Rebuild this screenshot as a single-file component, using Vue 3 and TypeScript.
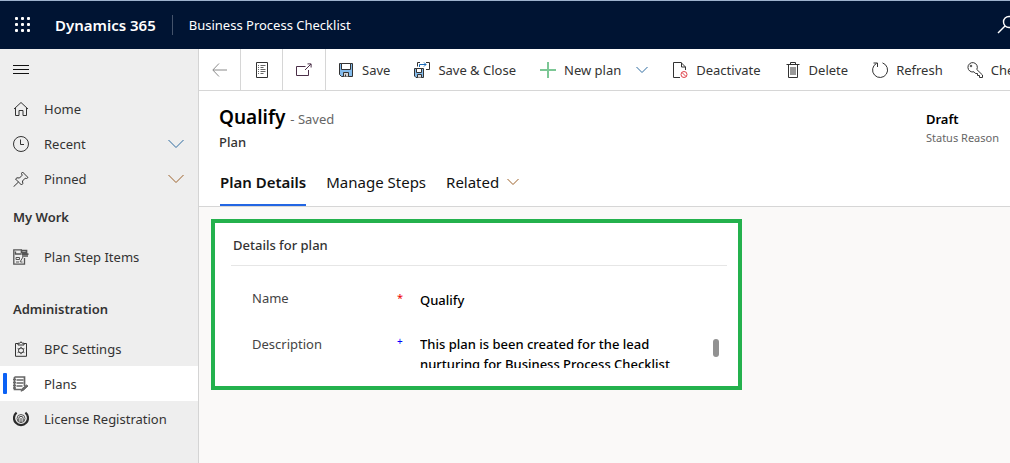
<script setup lang="ts">
import { ref } from 'vue'

interface NavItem { label: string; icon: string; expandable?: boolean }
interface NavGroup { title: string; items: NavItem[] }

const mainItems: NavItem[] = [
  { label: 'Home', icon: 'home' },
  { label: 'Recent', icon: 'clock', expandable: true },
  { label: 'Pinned', icon: 'pin', expandable: true },
]
const groups: NavGroup[] = [
  { title: 'My Work', items: [{ label: 'Plan Step Items', icon: 'steps' }] },
  {
    title: 'Administration',
    items: [
      { label: 'BPC Settings', icon: 'settings' },
      { label: 'Plans', icon: 'plans' },
      { label: 'License Registration', icon: 'license' },
    ],
  },
]
const current = ref('Plans')
const activeTab = ref('Plan Details')
const tabs = ['Plan Details', 'Manage Steps', 'Related']
const planName = ref('Qualify')
const description = ref('This plan is been created for the lead nurturing for Business Process Checklist')
</script>

<template>
  <div class="app">
    <header class="topbar">
      <button class="waffle" aria-label="App launcher">
        <svg width="16" height="16" viewBox="0 0 16 16" fill="#fff">
          <template v-for="r in 3" :key="r">
            <rect v-for="c in 3" :key="c" :x="(c - 1) * 6" :y="(r - 1) * 6" width="3" height="3" rx="1" />
          </template>
        </svg>
      </button>
      <span class="brand">Dynamics 365</span>
      <span class="app-name">Business Process Checklist</span>
      <button class="search" aria-label="Search">
        <svg width="20" height="20" viewBox="0 0 20 20" fill="none" stroke="#fff" stroke-width="1.4">
          <circle cx="12" cy="7" r="5.5" /><path d="M8 11 1 18" />
        </svg>
      </button>
    </header>

    <div class="body">
      <nav class="sidebar" aria-label="Site map">
        <button class="hamburger" aria-label="Collapse navigation">
          <svg width="16" height="10" viewBox="0 0 16 10" stroke="#111" fill="none"><path d="M0 .5h16M0 4.500h16M0 8.500h16" /></svg>
        </button>
        <ul>
          <li v-for="item in mainItems" :key="item.label">
            <component :is="item.expandable ? 'button' : 'a'" class="nav-item" :href="item.expandable ? undefined : '#'">
              <svg v-if="item.icon === 'home'" class="ico" viewBox="0 0 16 16"><path d="M1 8 8 1.500 15 8M2.500 7v7.500h3.500V9.500h4v5h3.500V7" /></svg>
              <svg v-else-if="item.icon === 'clock'" class="ico" viewBox="0 0 16 16"><circle cx="8" cy="8" r="7.500" /><path d="M7.500 3.500v5h3.500" /></svg>
              <svg v-else class="ico" viewBox="0 0 16 16"><path d="M9.500 1 15 6.500 13.500 7.500l-1.300-.3L9.500 10l.3 2.500L8.500 14 2.500 8l1.500-1.200 2.500.2L9.200 4.200 8.500 2.500zM5.500 11 .5 15.800" /></svg>
              <span>{{ item.label }}</span>
              <svg v-if="item.expandable" class="chev" width="16" height="10" viewBox="0 0 16 10" :class="item.icon"><path d="M.5 1 8 8.500 15.500 1" /></svg>
            </component>
          </li>
        </ul>
        <section v-for="group in groups" :key="group.title" class="group">
          <h2>{{ group.title }}</h2>
          <ul>
            <li v-for="item in group.items" :key="item.label">
              <a href="#" class="nav-item" :class="{ current: current === item.label }" @click.prevent="current = item.label">
                <svg v-if="item.icon === 'steps'" class="ico" viewBox="0 0 16 16">
                  <g stroke="#555"><path d="M9 .8H.8v14.400h10.700V9M2.500 2.500v2.500H8" stroke-width="1.300" /><path d="M3 8.500h3.500v2H3zM3 13h3M7 13l3-5M7.500 13h2" /><path d="M8.500 1.500h5v2h-5zM8.500 5.200h7M9 7h6" stroke-width="1.700" /></g>
                </svg>
                <svg v-else-if="item.icon === 'settings'" class="ico" viewBox="0 0 16 16">
                  <path d="M5 2.500H2.500v12.800h11V2.500H11M5 4V2.200h1.800L8 .7l1.200 1.500H11V4z" />
                  <circle cx="8" cy="9.500" r="2.500" /><path d="M8 5.800V7M8 12v1.200M4.700 7.500l1.200.7M10.100 10.800l1.200.7M11.300 7.500l-1.200.7M5.900 10.800l-1.200.7" />
                </svg>
                <svg v-else-if="item.icon === 'plans'" class="ico" viewBox="0 0 16 16">
                  <g stroke="#666"><path d="M1.500 1h10v9M1.500 1v12.500h7" stroke-width="1.700" /><path d="M0 3.500h3M0 6.500h3M0 9.500h3M0 12h3M3.500 4h7M3.500 7h7M3.500 10h6" stroke-width="1.600" /><path d="m15 10-4.500 4.200-2.500 1 1-2.500L13.500 9z" fill="#666" /></g>
                </svg>
                <svg v-else class="ico" viewBox="0 0 16 16">
                  <path d="M3.600 1.600A7 7 0 1 0 12.400 1.600" stroke="#2b2b2b" stroke-width="2.200" /><circle cx="8" cy="7.500" r="4" stroke="#555" /><path d="M5.800 10V7.500a2.200 2.200 0 0 1 4.400 0V10M8 7v5" stroke="#444" />
                </svg>
                <span>{{ item.label }}</span>
              </a>
            </li>
          </ul>
        </section>
      </nav>

      <main class="main">
        <div class="commands" role="toolbar" aria-label="Commands">
          <button class="sq" aria-label="Back"><svg width="16" height="14" viewBox="0 0 16 14" fill="none" stroke="#8a8a8a"><path d="M7 .5.8 7 7 13.500M1 7h14" /></svg></button>
          <button class="sq" aria-label="Form"><svg width="14" height="16" viewBox="0 0 14 16" fill="none" stroke="#333"><path d="M1.500.5h11v15h-11z" /><path d="M3 3.500h1M5.500 3.500h5M3 5.500h1M5.500 5.500h3M3 7.500h1M5.500 7.500h5M3 9.500h1M5.500 9.500h5M3 11.500h1M5.500 11.500h3" stroke="#666" /></svg></button>
          <button class="sq wide" aria-label="Open in new window"><svg width="16" height="14" viewBox="0 0 16 14" fill="none" stroke="#4b2f48"><path d="M9.500 3.500H.5v9h12V7M9 7l6-6M11.500.9h3.600v3.600" /></svg></button>
          <button class="cmd">
            <svg viewBox="0 0 16 16" fill="none" stroke="#333"><path d="M1.500 1.500h13v13h-11l-2-2z" fill="#83bbec" /><path d="M3.500 1.500h9v6h-9z" fill="#fff" /><path d="M5.500 14.500v-4h5v4" fill="#d5d5d5" /><path d="M7.500 12.500v2" /></svg>Save
          </button>
          <button class="cmd">
            <svg viewBox="0 0 16 16" fill="none" stroke="#333"><path d="M.5 6.500h9v9h-7.500L.5 14z" fill="#83bbec" /><path d="M2.500 6.500h5v4h-5z" fill="#fff" /><path d="M3.500 15.500v-3h4v3" fill="#ddd" /><path d="M3.500 4.500v-4H6M12 .5h3.500v7H12" /><path d="M5.500 5V2.500h6.500M10 .5l2 2-2 2" stroke="#1668b8" /></svg>Save &amp; Close
          </button>
          <button class="cmd">
            <svg viewBox="0 0 16 16" fill="none" stroke="#7cc795" stroke-width="2"><path d="M8 0v16M0 8h16" /></svg>New plan
            <svg class="small-chev" viewBox="0 0 12 8"><path d="M.5 1 6 6.500 11.500 1" /></svg>
          </button>
          <button class="cmd">
            <svg viewBox="0 0 16 16" fill="none" stroke="#333"><path d="M8 15.500H1.500V.5H9L13.500 5v3M9.500.5V5h4" /><circle cx="12" cy="12.500" r="3" stroke="#e0434b" /><path d="m10 10.500 4 4" stroke="#e0434b" /></svg>Deactivate
          </button>
          <button class="cmd">
            <svg viewBox="0 0 16 16" fill="none" stroke="#333"><path d="M1.500 2.500h13M5.500 2.500v-2h5v2M3.500 2.500v13h9v-13M6 5v8M8 5v8M10 5v8" /></svg>Delete
          </button>
          <button class="cmd">
            <svg viewBox="0 0 16 16" fill="none" stroke="#333"><path d="M10.500.9a7.500 7.500 0 1 1-6 .5M1.500 1h4v4" /></svg>Refresh
          </button>
          <button class="cmd">
            <svg viewBox="0 0 16 16" fill="none" stroke="#333"><path d="M9.800 7.500 15.500 13v2.500h-3v-2h-2v-2h-2L7 9.800A4.700 4.700 0 1 1 9.800 7.500z" /><circle cx="4" cy="4" r=".8" /></svg>Check
          </button>
        </div>

        <div class="record">
          <div class="record-head">
            <div>
              <h1>Qualify <small>- Saved</small></h1>
              <p class="entity">Plan</p>
            </div>
            <dl class="status"><dd>Draft</dd><dt>Status Reason</dt></dl>
          </div>
          <div class="tabs" role="tablist">
            <button v-for="tab in tabs" :key="tab" role="tab" :aria-selected="activeTab === tab" :class="{ active: activeTab === tab }" @click="activeTab = tab">
              {{ tab }}
              <svg v-if="tab === 'Related'" class="small-chev related" viewBox="0 0 12 8"><path d="M.5 1 6 6.500 11.500 1" /></svg>
            </button>
          </div>
        </div>

        <div class="canvas">
          <section class="card">
            <h3>Details for plan</h3>
            <div class="field">
              <label for="name">Name</label><span class="mark required">*</span>
              <input id="name" v-model="planName" type="text" />
            </div>
            <div class="field">
              <label for="description">Description</label><span class="mark recommended">+</span>
              <div class="scroll-area">
                <textarea id="description" v-model="description"></textarea>
                <span class="thumb"></span>
              </div>
            </div>
          </section>
        </div>
      </main>
    </div>
  </div>
</template>

<style>
html, body { margin: 0; overflow: hidden; }
</style>

<style scoped>
* { box-sizing: border-box; }
.app { min-height: 100vh; display: flex; flex-direction: column; font-family: "Segoe UI", "Noto Sans", "Open Sans", sans-serif; font-size: 13px; color: #333; }
button, input, textarea { font: inherit; color: inherit; background: none; border: 0; padding: 0; margin: 0; border-radius: 0; }
h1, h2, h3, p, ul, dl, dd { margin: 0; padding: 0; }
ul { list-style: none; }
a { color: inherit; text-decoration: none; }
svg { display: block; flex: none; }
.topbar { height: 49px; background: #001433; color: #fff; border-top: 1px solid #9db2cd; display: flex; align-items: center; padding-left: 15px; overflow: hidden; }
.waffle { margin-right: 24px; }
.brand { font-size: 15px; font-weight: 600; line-height: 20px; padding-right: 16px; }
.app-name { border-left: 1px solid #44536b; padding-left: 16px; line-height: 20px; white-space: nowrap; }
.search { margin-left: auto; margin-right: -7px; }
.body { flex: 1; display: flex; }
.sidebar { width: 199px; flex: none; background: #eee; border-right: 1px solid #d4d4d4; }
.hamburger { display: flex; align-items: center; height: 42px; padding-left: 13px; }
.nav-item { display: flex; align-items: center; width: 100%; height: 35px; padding: 0 14px 0 13px; position: relative; text-align: left; }
.nav-item span { margin-left: 15px; white-space: nowrap; }
.ico { width: 16px; height: 16px; fill: none; stroke: #333; }
.chev { fill: none; stroke: #2c6a9f; margin-left: auto; }
.chev.pin { stroke: #9c6128; }
.current { background: #fff; }
.current::before { content: ""; position: absolute; left: 3px; top: 7px; width: 4px; height: 21px; background: #0b61f5; border-radius: 1px; }
h2 { font-size: 13px; font-weight: 600; line-height: 43px; padding-left: 13px; }
.group + .group { padding-top: 14px; }
.main { flex: 1; min-width: 0; display: flex; flex-direction: column; background: #faf9f8; }
.commands { height: 42px; background: #fff; border-bottom: 1px solid #d6d6d6; display: flex; overflow: hidden; }
.sq { flex: none; width: 42px; border-right: 1px solid #d6d6d6; display: flex; align-items: center; justify-content: center; }
.sq.wide { width: 43px; }
.cmd { flex: none; display: flex; align-items: center; gap: 8px; padding: 0 12px; white-space: nowrap; }
.cmd svg { width: 16px; height: 16px; }
.small-chev, .cmd .small-chev { width: 12px; height: 8px; fill: none; stroke: #2c6a9f; }
.cmd .small-chev { margin-left: 7px; }
.record { background: #fff; border-bottom: 1px solid #d6d6d6; padding-left: 20px; }
.record-head { display: flex; justify-content: space-between; padding: 14px 11px 0 0; }
h1 { font-size: 19px; font-weight: 600; line-height: 25px; color: #000; }
small { font-size: 13px; font-weight: 400; color: #666; }
.entity { line-height: 20px; font-weight: 500; }
.status { display: flex; flex-direction: column; padding-top: 5px; }
.status dd { font-weight: 600; line-height: 18px; color: #000; }
.status dt { font-size: 11px; line-height: 20px; color: #666; }
.tabs { display: flex; gap: 20px; margin-top: 8px; padding-left: 1px; }
.tabs button { height: 46px; display: flex; align-items: center; gap: 8px; font-size: 15px; color: #111; border-bottom: 2px solid transparent; }
.tabs .active { font-weight: 600; border-color: #2266e3; }
.small-chev.related { stroke: #9c6128; }
.canvas { flex: 1; padding: 12px; }
.card { width: 100%; max-width: 531px; border: 4px solid #24b14d; background: #fff; padding: 0 11px 18px 16px; }
h3 { font-size: 13px; font-weight: 500; line-height: 44px; height: 43px; padding-left: 2px; border-bottom: 1px solid #e6e6e6; }
.field { display: grid; grid-template-columns: 145px 23px 1fr; padding-left: 21px; color: #444; }
.field label { line-height: 20px; }
.field + .field { padding-top: 22px; }
h3 + .field { padding-top: 22px; }
.mark { line-height: 20px; font-size: 11px; }
.required { color: #e00; }
.recommended { color: #00f; font-size: 10px; line-height: 14px; }
input { width: 100%; height: 24px; font-weight: 500; color: #000; }
.scroll-area { display: flex; justify-content: space-between; }
textarea { width: 270px; height: 34px; line-height: 20px; resize: none; overflow: hidden; font-weight: 500; color: #000; outline: 0; display: block; }
.thumb { width: 6px; height: 18px; margin: 5px 8px 0 0; border-radius: 3px; background: #919191; }
</style>
